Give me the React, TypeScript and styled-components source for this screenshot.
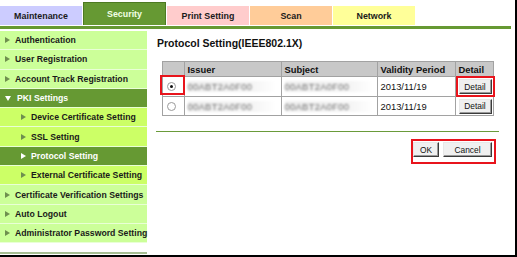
import React from 'react'
import styled, { createGlobalStyle } from 'styled-components'

const GlobalStyle = createGlobalStyle`
  html, body {
    margin: 0;
    padding: 0;
    background: #fff;
  }
  body {
    font-family: "Liberation Sans", Arial, sans-serif;
    color: #111;
  }
`

const Frame = styled.div`
  width: 517px;
  height: 257px;
  box-sizing: border-box;
  border-right: 2px solid #000;
  border-bottom: 2px solid #000;
  background: #fff;
  overflow: hidden;
`

// タブ
const TabBar = styled.div`
  display: flex;
  align-items: flex-end;
  gap: 1px;
  height: 25px;
`

const Tab = styled.div<{ $bg: string; $active?: boolean }>`
  width: ${(p) => (p.$active ? 83 : 82)}px;
  height: ${(p) => (p.$active ? 23 : 19)}px;
  box-sizing: border-box;
  display: flex;
  align-items: center;
  justify-content: center;
  background: ${(p) => p.$bg};
  border: 1px solid ${(p) => (p.$active ? '#4d7a22' : 'transparent')};
  border-bottom: none;
  color: ${(p) => (p.$active ? '#f2ffe4' : '#1a1a1a')};
  font-size: 8.9px;
  font-weight: bold;
`

const GreenBar = styled.div`
  margin-top: 1px;
  width: 511px;
  height: 3px;
  background: #669933;
`

const Main = styled.div`
  display: flex;
  margin-top: 2px;
`

// サイドメニュー
const Sidebar = styled.div`
  width: 147px;
  display: flex;
  flex-direction: column;
`

type ItemKind = 'main' | 'sub' | 'open' | 'current'

const MenuItem = styled.div<{ $kind: ItemKind }>`
  height: 18.3px;
  box-sizing: content-box;
  display: flex;
  align-items: center;
  gap: 5px;
  padding-left: ${(p) => (p.$kind === 'sub' || p.$kind === 'current' ? 21 : 5)}px;
  border-bottom: 1px solid #e9ffd6;
  background: ${(p) =>
    p.$kind === 'main' ? '#ccff99' : p.$kind === 'sub' ? '#ccff66' : '#669933'};
  color: ${(p) => (p.$kind === 'open' || p.$kind === 'current' ? '#fff' : '#1a1a1a')};
  font-size: 8.7px;
  font-weight: bold;
  white-space: nowrap;
`

const Arrow = styled.span<{ $light?: boolean; $down?: boolean }>`
  width: 0;
  height: 0;
  flex: none;
  ${(p) =>
    p.$down
      ? `border-top: 5px solid #fff; border-left: 3px solid transparent; border-right: 3px solid transparent; margin-right: 1px;`
      : `border-left: 5px solid ${p.$light ? '#fff' : '#6f8f4f'}; border-top: 3px solid transparent; border-bottom: 3px solid transparent;`}
`

const SideFoot = styled.div`
  margin-top: 9px;
  height: 2px;
  background: #a7bf94;
`

// コンテンツ
const Content = styled.div`
  width: 343px;
  margin-left: 9px;
  display: flex;
  flex-direction: column;
`

const Title = styled.div`
  margin: 5px 0 0 1px;
  font-size: 10.5px;
  line-height: 14px;
  font-weight: bold;
  color: #111;
`

const CertTable = styled.table`
  margin: 11px auto 0;
  width: 331px;
  table-layout: fixed;
  border-collapse: collapse;
  border: 1px solid #a2a2a2;
  font-size: 9.4px;
`

const Th = styled.th`
  height: 14px;
  padding: 0 3px;
  background: #c8c8c8;
  border: 1px solid #a2a2a2;
  text-align: left;
  font-weight: bold;
  color: #111;
`

const Td = styled.td<{ $h: number }>`
  position: relative;
  height: ${(p) => p.$h}px;
  padding: 0 3px;
  border: 1px solid #a2a2a2;
  color: #111;
  white-space: nowrap;
`

const RadioCell = styled(Td)`
  padding-left: 4px;
`

const Radio = styled.span<{ $checked?: boolean }>`
  display: block;
  width: 7px;
  height: 7px;
  border-radius: 50%;
  border: 1px solid #9a9a9a;
  background: #fff;
  position: relative;
  &::after {
    content: '';
    display: ${(p) => (p.$checked ? 'block' : 'none')};
    position: absolute;
    left: 2px;
    top: 2px;
    width: 3px;
    height: 3px;
    border-radius: 50%;
    background: #111;
  }
`

// 注記の赤枠
const CellMark = styled.span`
  position: absolute;
  left: -3px;
  top: -2px;
  right: -1px;
  bottom: 1px;
  border: 2px solid #e8141c;
`

const Masked = styled.span`
  display: inline-block;
  width: 88px;
  background: linear-gradient(to right, #efefef, #f5f5f5 75%, #fff);
  color: #6e6e6e;
  filter: blur(0.9px);
  font-size: 9.4px;
  letter-spacing: 0.3px;
`

const Button = styled.button<{ $w: number; $marked?: boolean }>`
  width: ${(p) => p.$w}px;
  height: 15px;
  padding: 0;
  box-sizing: border-box;
  background: #f0f0f0;
  border: 1px solid;
  border-color: #e8e8e8 #3a3a3a #3a3a3a #e8e8e8;
  box-shadow: inset -1px -1px 0 #9a9a9a;
  font-family: "Liberation Sans", Arial, sans-serif;
  font-size: 8.4px;
  color: #111;
  ${(p) => (p.$marked ? 'outline: 2px solid #e8141c; outline-offset: 1px;' : '')}
`

const Rule = styled.div`
  margin-top: 15px;
  height: 1px;
  background: #6a9b3a;
`

const Actions = styled.div`
  display: flex;
  justify-content: flex-end;
  margin: 7px 3px 0 0;
`

const Callout = styled.div`
  display: flex;
  gap: 4px;
  padding: 1px 2px 5px 0;
  border: 2px solid #e8141c;
`

const tabs = [
  { label: 'Maintenance', bg: '#ccccff' },
  { label: 'Security', bg: '#669933', active: true },
  { label: 'Print Setting', bg: '#ffcccc' },
  { label: 'Scan', bg: '#ffcc99' },
  { label: 'Network', bg: '#ffff99' },
]

const menu: { label: string; kind: ItemKind }[] = [
  { label: 'Authentication', kind: 'main' },
  { label: 'User Registration', kind: 'main' },
  { label: 'Account Track Registration', kind: 'main' },
  { label: 'PKI Settings', kind: 'open' },
  { label: 'Device Certificate Setting', kind: 'sub' },
  { label: 'SSL Setting', kind: 'sub' },
  { label: 'Protocol Setting', kind: 'current' },
  { label: 'External Certificate Setting', kind: 'sub' },
  { label: 'Certificate Verification Settings', kind: 'main' },
  { label: 'Auto Logout', kind: 'main' },
  { label: 'Administrator Password Setting', kind: 'main' },
]

const certs = [
  { issuer: '00ABT2A0F00', subject: '00ABT2A0F00', period: '2013/11/19', checked: true, h: 19 },
  { issuer: '00ABT2A0F00', subject: '00ABT2A0F00', period: '2013/11/19', checked: false, h: 18 },
]

export default function App() {
  return (
    <Frame>
      <GlobalStyle />
      <TabBar>
        {tabs.map((t) => (
          <Tab key={t.label} $bg={t.bg} $active={t.active}>
            {t.label}
          </Tab>
        ))}
      </TabBar>
      <GreenBar />
      <Main>
        <Sidebar>
          {menu.map((m) => (
            <MenuItem key={m.label} $kind={m.kind}>
              <Arrow $down={m.kind === 'open'} $light={m.kind === 'current'} />
              {m.label}
            </MenuItem>
          ))}
          <SideFoot />
        </Sidebar>
        <Content>
          <Title>Protocol Setting(IEEE802.1X)</Title>
          <CertTable>
            <colgroup>
              <col style={{ width: 22 }} />
              <col style={{ width: 97 }} />
              <col style={{ width: 96 }} />
              <col style={{ width: 78 }} />
              <col style={{ width: 38 }} />
            </colgroup>
            <thead>
              <tr>
                <Th />
                <Th>Issuer</Th>
                <Th>Subject</Th>
                <Th>Validity Period</Th>
                <Th>Detail</Th>
              </tr>
            </thead>
            <tbody>
              {certs.map((c, i) => (
                <tr key={i}>
                  <RadioCell $h={c.h}>
                    <Radio $checked={c.checked} />
                    {c.checked && <CellMark />}
                  </RadioCell>
                  <Td $h={c.h}>
                    <Masked>{c.issuer}</Masked>
                  </Td>
                  <Td $h={c.h}>
                    <Masked>{c.subject}</Masked>
                  </Td>
                  <Td $h={c.h}>{c.period}</Td>
                  <Td $h={c.h}>
                    <Button $w={33} $marked={c.checked}>
                      Detail
                    </Button>
                  </Td>
                </tr>
              ))}
            </tbody>
          </CertTable>
          <Rule />
          <Actions>
            <Callout>
              <Button $w={26}>OK</Button>
              <Button $w={49}>Cancel</Button>
            </Callout>
          </Actions>
        </Content>
      </Main>
    </Frame>
  )
}
